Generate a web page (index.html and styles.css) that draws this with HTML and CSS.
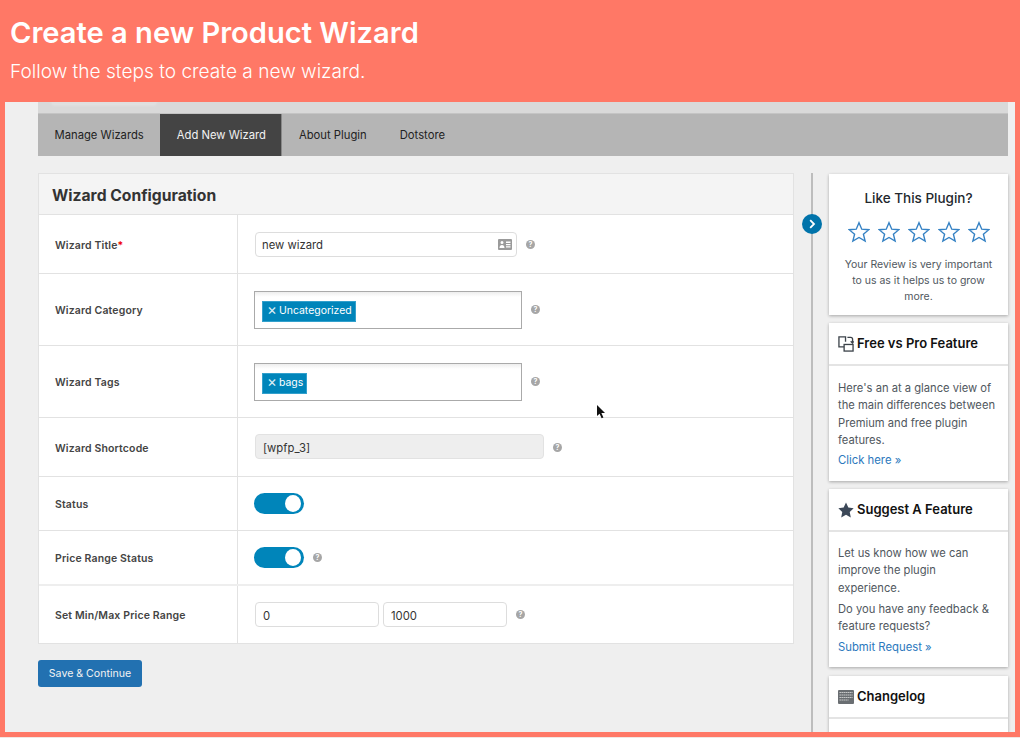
FILE: index.html
```html
<!DOCTYPE html>
<html lang="en">
<head>
    <meta charset="utf-8">
    <title>Create a new Product Wizard</title>
    <link rel="stylesheet" href="styles.css">
</head>
<body>
    <header class="hero">
        <h1>Create a new Product Wizard</h1>
        <p>Follow the steps to create a new wizard.</p>
    </header>

    <div class="content">
        <div class="top-strip"><span class="strip-shadow"></span></div>
        <nav class="tabs">
            <a href="#" class="tab">Manage Wizards</a>
            <a href="#" class="tab active">Add New Wizard</a>
            <a href="#" class="tab">About Plugin</a>
            <a href="#" class="tab">Dotstore</a>
        </nav>

        <div class="columns">
            <main class="main-col">
                <section class="panel">
                    <h2 class="panel-title">Wizard Configuration</h2>

                    <div class="row row-title">
                        <div class="row-label">Wizard Title<span class="req">*</span></div>
                        <div class="row-field">
                            <div class="input-wrap">
                                <input type="text" class="text-input title-input" value="new wizard">
                                <svg class="card-icon" width="14" height="11" viewBox="0 0 14 11"><path fill="#9a9a9a" fill-rule="evenodd" d="M1 0h12a1 1 0 0 1 1 1v9a1 1 0 0 1-1 1H1a1 1 0 0 1-1-1V1a1 1 0 0 1 1-1zM4 2a1.5 1.5 0 1 0 0 3 1.5 1.5 0 0 0 0-3zM1.5 9h5c0-2-1-3-2.500-3s-2.500 1-2.500 3zM8 2.500V4h4.500V2.500zM8 5v1.300h4.500V5zM8 7.300v1.300h4.500V7.300z"/></svg>
                            </div>
                            <span class="help">?</span>
                        </div>
                    </div>

                    <div class="row row-select">
                        <div class="row-label">Wizard Category</div>
                        <div class="row-field">
                            <div class="select-box"><span class="chip"><span class="chip-x">×</span>Uncategorized</span></div>
                            <span class="help">?</span>
                        </div>
                    </div>

                    <div class="row row-select">
                        <div class="row-label">Wizard Tags</div>
                        <div class="row-field">
                            <div class="select-box"><span class="chip"><span class="chip-x">×</span>bags</span></div>
                            <span class="help">?</span>
                        </div>
                    </div>

                    <div class="row row-code">
                        <div class="row-label">Wizard Shortcode</div>
                        <div class="row-field">
                            <input type="text" class="text-input code-input" value="[wpfp_3]" readonly>
                            <span class="help">?</span>
                        </div>
                    </div>

                    <div class="row row-status">
                        <div class="row-label">Status</div>
                        <div class="row-field"><span class="toggle"></span></div>
                    </div>

                    <div class="row row-price">
                        <div class="row-label">Price Range Status</div>
                        <div class="row-field">
                            <span class="toggle"></span>
                            <span class="help help-price">?</span>
                        </div>
                    </div>

                    <div class="row row-range">
                        <div class="row-label">Set Min/Max Price Range</div>
                        <div class="row-field">
                            <input type="text" class="text-input num-input" value="0">
                            <input type="text" class="text-input num-input num-max" value="1000">
                            <span class="help">?</span>
                        </div>
                    </div>
                </section>

                <button class="save-btn">Save &amp; Continue</button>
            </main>

            <aside class="sidebar">
                <span class="collapse">
                    <svg width="10" height="10" viewBox="0 0 10 10"><path d="M3.200 1.200 7 5 3.200 8.800" fill="none" stroke="#fff" stroke-width="1.800"/></svg>
                </span>

                <div class="card card-like">
                    <h3>Like This Plugin?</h3>
                    <div class="stars">
                        <svg class="star" viewBox="0 0 24 24"><path d="M12 1.800l3 7.100 7.700.6-5.900 5 1.900 7.500L12 18l-6.700 4 1.900-7.500-5.900-5 7.700-.6z"/></svg>
                        <svg class="star" viewBox="0 0 24 24"><path d="M12 1.800l3 7.100 7.700.6-5.900 5 1.900 7.500L12 18l-6.700 4 1.900-7.500-5.900-5 7.700-.6z"/></svg>
                        <svg class="star" viewBox="0 0 24 24"><path d="M12 1.800l3 7.100 7.700.6-5.900 5 1.900 7.500L12 18l-6.700 4 1.900-7.500-5.900-5 7.700-.6z"/></svg>
                        <svg class="star" viewBox="0 0 24 24"><path d="M12 1.800l3 7.100 7.700.6-5.900 5 1.900 7.500L12 18l-6.700 4 1.900-7.500-5.900-5 7.700-.6z"/></svg>
                        <svg class="star" viewBox="0 0 24 24"><path d="M12 1.800l3 7.100 7.700.6-5.900 5 1.900 7.500L12 18l-6.700 4 1.900-7.500-5.900-5 7.700-.6z"/></svg>
                    </div>
                    <p>Your Review is very important to us as it helps us to grow more.</p>
                </div>

                <div class="card card-free">
                    <h4 class="card-head">
                        <svg width="16" height="16" viewBox="0 0 17 17" fill="none" stroke="#3c434a" stroke-width="1.400"><path d="M6.500 11.500H1V1h7v5"/><rect x="6.500" y="9" width="9.500" height="7"/><path d="M10 1.500h3.500a2 2 0 0 1 2 2V7"/><path d="M13.500 5.500l2 2 1-2"/></svg>
                        Free vs Pro Feature
                    </h4>
                    <div class="card-body">
                        <p>Here's an at a glance view of the main differences between Premium and free plugin features.</p>
                        <a href="#">Click here »</a>
                    </div>
                </div>

                <div class="card card-suggest">
                    <h4 class="card-head">
                        <svg width="16" height="16" viewBox="0 0 24 24" fill="#3c4858"><path d="M12 .8l3.500 7.500 8 1-5.900 5.600 1.600 8.200L12 19l-7.200 4.100 1.600-8.200L.5 9.300l8-1z"/></svg>
                        Suggest A Feature
                    </h4>
                    <div class="card-body">
                        <p>Let us know how we can improve the plugin experience.</p>
                        <p class="second">Do you have any feedback &amp; feature requests?</p>
                        <a href="#">Submit Request »</a>
                    </div>
                </div>

                <div class="card card-log">
                    <h4 class="card-head">
                        <svg width="16" height="14" viewBox="0 0 16 14"><rect width="16" height="14" rx="1" fill="#6a6e72"/><path d="M1.500 2.500h13M1.500 5h13M1.500 7.500h13M1.500 10h9" stroke="#dedede" stroke-width=".9" stroke-dasharray="1.400 .6"/></svg>
                        Changelog
                    </h4>
                </div>
            </aside>
        </div>

        <svg class="cursor" width="11" height="16" viewBox="0 0 11 16"><path d="M1 1v11l2.600-2.300 2 4.500 1.800-.8-2-4.400H9z" fill="#111"/></svg>
    </div>
</body>
</html>
```

FILE: styles.css
```css
* {
    box-sizing: border-box;
}

html {
    background: #f1e6e3;
}

body {
    margin: 0;
    height: 737px;
    overflow: hidden;
    background: #ff7866;
    font-family: Inter, "Liberation Sans", sans-serif;
}

/* orange banner */
.hero {
    height: 102px;
    padding: 15px 10px 0;
    color: #fff;
}

.hero h1 {
    margin: 0;
    font-size: 29.100px;
    line-height: 36px;
    font-weight: 600;
}

.hero p {
    margin: 7px 0 0;
    font-size: 19.100px;
    line-height: 26px;
    font-weight: 300;
}

.content {
    position: relative;
    height: 630px;
    margin: 0 5px;
    padding: 0 7px 0 33px;
    background: #efefef;
    overflow: hidden;
}

.top-strip {
    position: relative;
    height: 11px;
    background: #d9d9d9;
}

.strip-shadow {
    position: absolute;
    left: 14px;
    top: -4px;
    width: 104px;
    height: 6px;
    background: #dfdfdf;
    box-shadow: 0 1px 3px #e4e4e4;
}

.tabs {
    display: flex;
    height: 43px;
    background: #b5b5b5;
    border-top: 1px solid #c4c4c4;
}

.tab {
    display: flex;
    align-items: center;
    padding: 0 16.500px;
    font-size: 11.250px;
    color: #222;
    text-decoration: none;
}

.tab.active {
    padding-right: 15.500px;
    background: #444;
    color: #f1f1f1;
    border-right: 1px solid #888;
}

.columns {
    display: flex;
    margin-top: 17px;
}

.main-col {
    width: 756px;
    flex: none;
}

.panel {
    background: #fff;
    border: 1px solid #e2e2e2;
}

.panel-title {
    margin: 0;
    height: 41px;
    padding: 1px 13px 0;
    background: #f4f4f4;
    border-bottom: 1px solid #e2e2e2;
    font-size: 15.700px;
    line-height: 41px;
    font-weight: 700;
    color: #333;
}

.row {
    display: flex;
    border-bottom: 1px solid #e2e2e2;
}

.row:last-child {
    border-bottom: 0;
}

.row-title { height: 59px; }
.row-select { height: 72px; }
.row-code { height: 59px; }
.row-status { height: 54px; }
.row-price { height: 55px; border-bottom-width: 2px; border-bottom-color: #eee; }
.row-range { height: 57px; }

.row-label {
    width: 199px;
    flex: none;
    display: flex;
    align-items: center;
    padding: 2px 0 0 16px;
    border-right: 1px solid #e2e2e2;
    font-size: 10.500px;
    font-weight: 600;
    letter-spacing: .14px;
    color: #444;
}

.req {
    color: #e00;
}

.row-field {
    display: flex;
    align-items: center;
    padding-left: 16px;
    flex: 1;
}

.text-input {
    height: 25px;
    margin-left: 1px;
    padding: 2px 7px 0;
    border: 1px solid #ddd;
    border-radius: 4px;
    background: #fff;
    font-family: inherit;
    font-size: 11.300px;
    color: #333;
    outline: none;
}

.input-wrap {
    position: relative;
    display: flex;
}

.title-input {
    width: 262px;
    padding-left: 6px;
}

.card-icon {
    position: absolute;
    right: 5px;
    top: 7px;
}

.code-input {
    width: 289px;
    margin-top: -1px;
    background: #eee;
    border-color: #e2e2e2;
}

.num-input {
    width: 124px;
}

.num-max {
    margin-left: 4px;
}

.help {
    display: inline-flex;
    align-items: center;
    justify-content: center;
    width: 9px;
    height: 9px;
    margin-left: 9px;
    border-radius: 50%;
    background: #a6a6a6;
    color: #fff;
    font-size: 7px;
    font-weight: 700;
    line-height: 1;
}

.help-price {
    margin-top: -1px;
}

.select-box {
    width: 268px;
    height: 38px;
    padding: 7px 7px 0;
    border: 1px solid #aaa;
    background: linear-gradient(#eee, #fff 5px);
}

.chip {
    display: inline-flex;
    align-items: center;
    height: 21px;
    padding: 0 3px 2px;
    background: #0085ba;
    border: 1px solid #33a0cc;
    color: #fff;
    font-size: 10.450px;
}

.chip-x {
    width: 13px;
    margin-top: -2px;
    padding-right: 1px;
    font-size: 15px;
    line-height: 14px;
    color: #dcedf5;
    text-align: center;
}

.toggle {
    position: relative;
    display: block;
    width: 50px;
    height: 21px;
    border-radius: 11px;
    background: #0085ba;
}

.toggle::after {
    content: "";
    position: absolute;
    right: 3px;
    top: 2px;
    width: 16px;
    height: 17px;
    border-radius: 50%;
    background: #fff;
}

.save-btn {
    display: block;
    width: 104px;
    height: 27px;
    margin-top: 16px;
    padding: 0;
    border: 0;
    border-radius: 3px;
    background: #2271b1;
    color: #f2f2f2;
    font-family: inherit;
    font-size: 10.600px;
}

/* right column */
.sidebar {
    position: relative;
    margin-left: 17px;
    padding-left: 16px;
    width: 197px;
    height: 560px;
    border-left: 2px solid #bdbdbd;
}

.collapse {
    position: absolute;
    left: -11px;
    top: 41px;
    display: flex;
    align-items: center;
    justify-content: center;
    width: 20px;
    height: 20px;
    border-radius: 50%;
    background: #0073aa;
}

.card {
    width: 179px;
    margin-bottom: 8px;
    background: #fff;
    box-shadow: 0 1px 3px rgba(0, 0, 0, .3);
    font-size: 11.200px;
    line-height: 17.300px;
    color: #50575e;
}

.card-like {
    height: 141px;
    margin-top: 1px;
    padding: 15px 10px 0;
    text-align: center;
}

.card-like h3 {
    margin: 0;
    font-size: 13.500px;
    line-height: 18px;
    font-weight: 500;
    color: #23282d;
}

.stars {
    display: flex;
    justify-content: center;
    gap: 8px;
    margin-top: 14px;
}

.star {
    width: 22px;
    height: 22px;
    fill: none;
    stroke: #3582c4;
    stroke-width: 1.500;
}

.card-like p {
    margin: 14px 0 0;
    line-height: 16px;
    font-size: 10.500px;
}

.card-head {
    display: flex;
    align-items: center;
    gap: 3px;
    height: 43px;
    margin: 0;
    padding-left: 9px;
    border-bottom: 2px solid #e4e4e4;
    font-size: 13px;
    font-weight: 600;
    color: #111;
}

.card-free .card-head {
    padding-top: 1px;
}

.card-body {
    padding: 13px 11px 0 9px;
}

.card-free .card-body {
    padding-top: 14px;
}

.card-body p {
    margin: 0;
}

.card-body .second {
    margin-top: 4px;
}

.card-body a {
    display: block;
    margin-top: 4px;
    font-size: 11.300px;
    color: #2b78bd;
    text-decoration: none;
}

.card-free a {
    margin-top: 3px;
}

.card-free { height: 158px; }
.card-suggest { height: 178px; }
.card-log { height: 90px; margin-top: 9px; }

.cursor {
    position: absolute;
    left: 591px;
    top: 302px;
}
```
